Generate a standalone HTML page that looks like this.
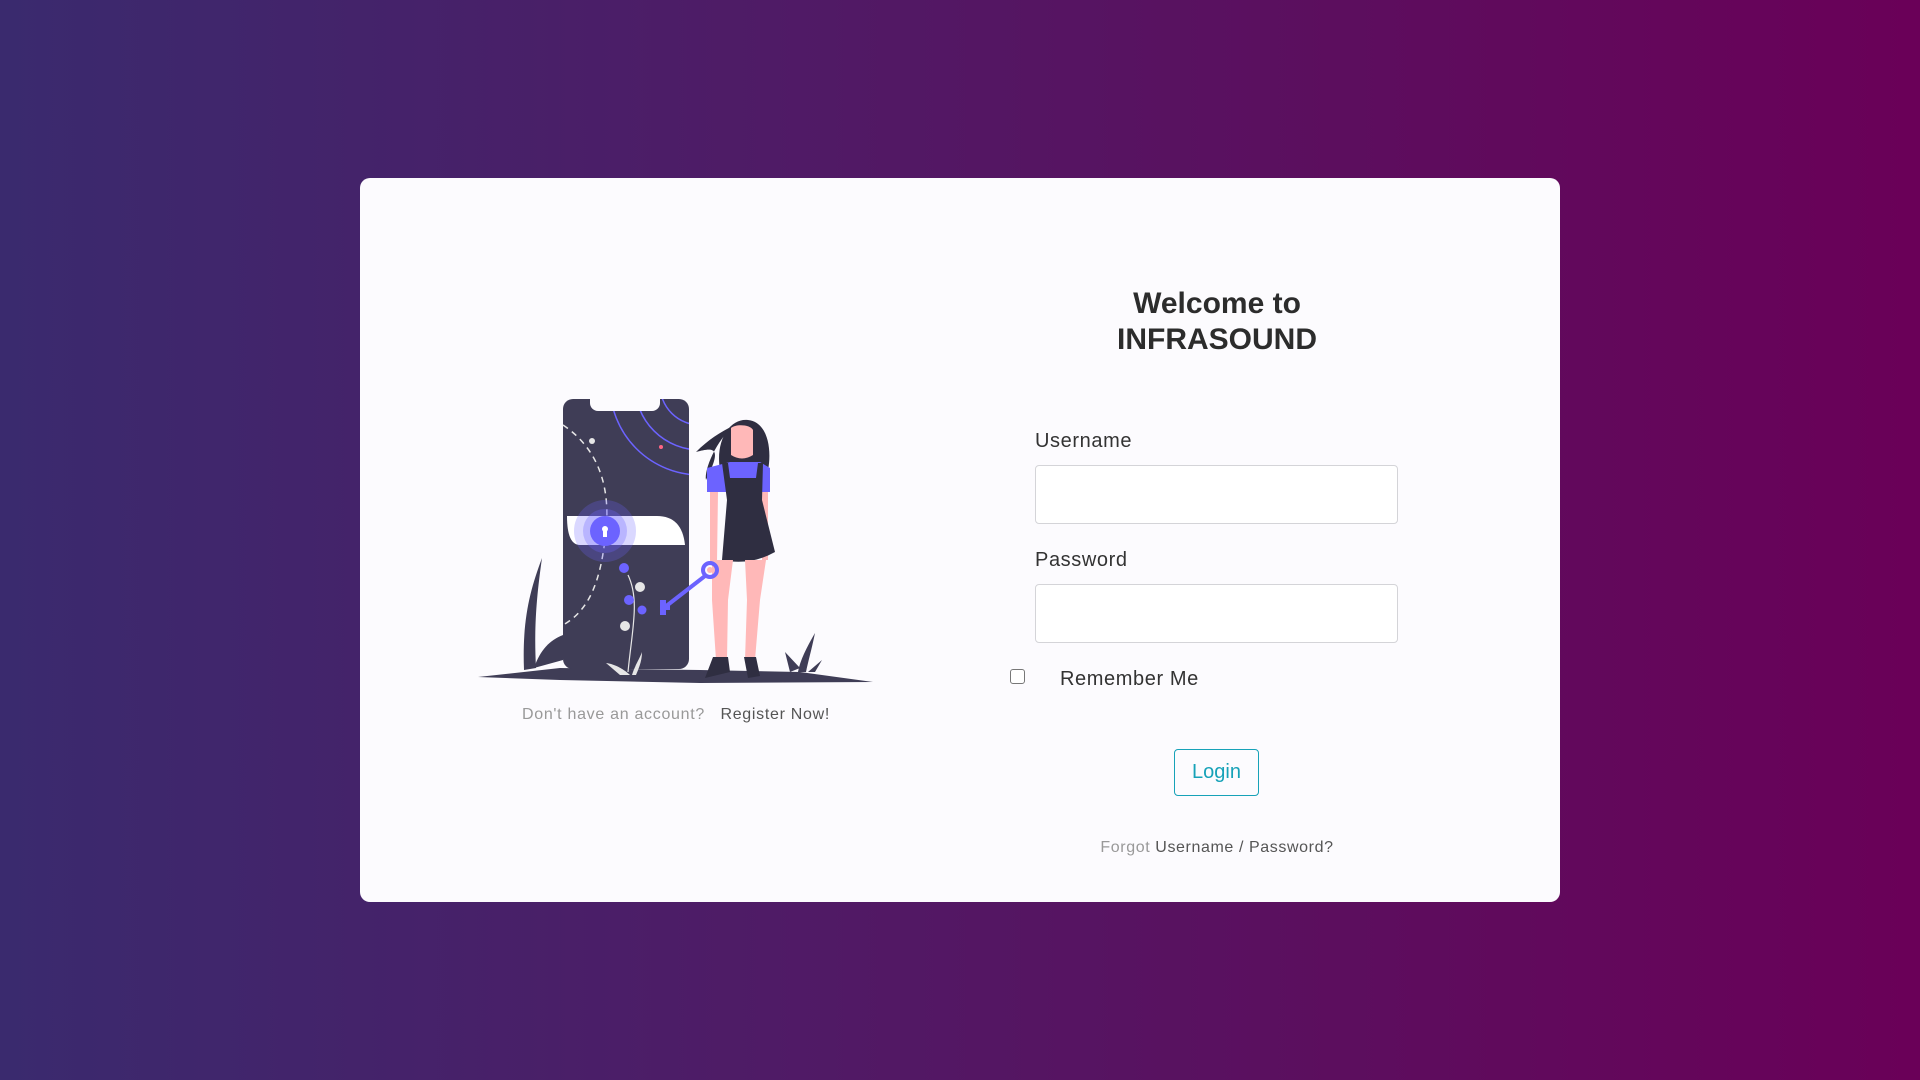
<!DOCTYPE html>
<html><head><meta charset="utf-8"><style>
html,body{margin:0;padding:0;width:1920px;height:1080px;overflow:hidden}
body{background:linear-gradient(90deg,#3a2a6e 0%,#4f1b66 40%,#5c0e5e 70%,#6a0058 100%);font-family:"Liberation Sans",sans-serif;position:relative}
.card{position:absolute;left:360px;top:178px;width:1200px;height:724px;background:#fcfbfe;border-radius:10px}
.abs{position:absolute}
h1{position:absolute;left:1017px;width:400px;top:286px;margin:0;text-align:center;font-size:30px;line-height:36px;font-weight:bold;color:#2c2c2c}
.lbl{position:absolute;left:1035px;font-size:20px;color:#333;letter-spacing:0.6px}
.inp{position:absolute;left:1035px;width:361px;height:57px;border:1px solid #d4d4d8;border-radius:4px;background:#fff}
</style></head><body>
<div class="card"></div>
<svg class="abs" style="left:0;top:0" width="1920" height="1080" viewBox="0 0 1920 1080">
<defs><clipPath id="ph"><rect x="563" y="399" width="126" height="270" rx="10"/></clipPath></defs>
<polygon points="478,677 560,668 700,670 800,672 873,682 700,683 560,680" fill="#3f3d56"/>
<path d="M524,670 C522,620 530,590 542,558 C536,600 534,630 536,668 Z" fill="#3f3d56"/>
<path d="M534,668 C540,650 550,640 563,635 L563,660 Z" fill="#3f3d56"/>
<rect x="563" y="399" width="126" height="270" rx="10" fill="#3f3d56"/>
<g clip-path="url(#ph)" fill="none" stroke="#6c63ff" stroke-width="1.5">
<circle cx="700" cy="385" r="90"/><circle cx="700" cy="385" r="65"/><circle cx="700" cy="385" r="40"/>
</g>
<path d="M590,399 h70 v4 a8,8 0 0 1 -8,8 h-54 a8,8 0 0 1 -8,-8z" fill="#fcfbfe"/>
<path d="M563,425 C600,450 612,490 605,540 C600,580 590,610 563,625" fill="none" stroke="#e6e6e6" stroke-width="1.5" stroke-dasharray="6,5"/>
<circle cx="592" cy="441" r="3" fill="#e6e6e6"/><circle cx="661" cy="447" r="2" fill="#ff6584"/>
<path d="M567,516 h90 q25,0 28,29 h-105 q-13,0 -13,-29z" fill="#fff"/>
<circle cx="605" cy="531" r="31" fill="#6c63ff" opacity="0.25"/>
<circle cx="605" cy="531" r="22" fill="#6c63ff" opacity="0.3"/>
<circle cx="605" cy="531" r="15" fill="#6c63ff"/>
<rect x="603" y="529" width="4" height="8" fill="#fff"/><circle cx="605" cy="529" r="3" fill="#fff"/>
<path d="M628,575 C640,600 632,630 628,672" fill="none" stroke="#e6e6e6" stroke-width="1.2"/>
<circle cx="624" cy="568" r="5" fill="#6c63ff"/><circle cx="640" cy="587" r="5" fill="#e6e6e6"/>
<circle cx="629" cy="600" r="5" fill="#6c63ff"/><circle cx="642" cy="610" r="4.5" fill="#6c63ff"/>
<circle cx="625" cy="626" r="5" fill="#e6e6e6"/>
<path d="M606,663 C615,664 625,670 630,675 L620,675 Z M632,675 C635,665 640,658 642,652 C642,662 638,670 636,675Z" fill="#e6e6e6"/>
<path d="M706,480 C704,470 716,440 735,425 C720,432 708,440 696,452 C712,448 724,445 706,480Z" fill="#2f2e41"/>
<path d="M720,470 C715,440 730,418 748,420 C768,422 772,450 768,470 Z" fill="#2f2e41"/>
<path d="M731,428 C735,424 750,424 753,430 L753,455 Q742,462 731,455z" fill="#ffb8b8"/>
<path d="M707,468 L730,462 L760,462 L770,468 L770,492 L707,492 Z" fill="#6c63ff"/>
<path d="M710,492 L718,492 L717,562 L710,562 Z M762,492 L768,492 L768,560 L762,560Z" fill="#ffb8b8"/>
<path d="M722,463 L728,463 L730,478 L756,478 L758,463 L763,463 L762,500 L775,552 Q750,566 722,560 L727,500 Z" fill="#2f2e41"/>
<path d="M712,560 L733,560 L728,600 L727,660 L716,660 L712,600 Z M745,560 L766,560 L760,600 L755,660 L745,660 L747,600Z" fill="#ffb8b8"/>
<path d="M713,657 L728,657 L730,672 L705,678 Z M744,657 L756,657 L760,676 L748,678Z" fill="#2f2e41"/>
<circle cx="710" cy="570" r="7" fill="none" stroke="#6c63ff" stroke-width="4"/>
<path d="M705,576 L665,607" stroke="#6c63ff" stroke-width="4"/>
<path d="M660,600 h6 v4 h4 v6 h-4 v5 h-6 z" fill="#6c63ff"/>
<circle cx="710" cy="570" r="3" fill="#ffb8b8"/>
<path d="M790,672 L785,652 L800,668 Z M798,672 C800,660 808,645 815,633 C812,648 808,662 806,672Z M808,672 L822,660 L815,672Z" fill="#3f3d56"/>
</svg>
<div class="abs" style="left:360px;width:632px;top:705px;text-align:center;font-size:16px;line-height:20px;letter-spacing:0.7px"><span style="color:#999">Don't have an account?</span>&nbsp;&nbsp; <span style="color:#555">Register Now!</span></div>
<h1>Welcome to<br>INFRASOUND</h1>
<div class="lbl" style="top:430px">Username</div>
<div class="inp" style="top:465px"></div>
<div class="lbl" style="top:549px">Password</div>
<div class="inp" style="top:584px"></div>
<div class="abs" style="left:1010px;top:669px;width:13px;height:13px;border:1px solid #777;border-radius:3px;background:#fff"></div>
<div class="abs" style="left:1060px;top:668px;font-size:20px;color:#333;letter-spacing:0.6px">Remember Me</div>
<div class="abs" style="left:1174px;top:749px;width:83px;height:45px;border:1px solid #17a2b8;border-radius:4px;color:#17a2b8;font-size:20px;line-height:45px;text-align:center">Login</div>
<div class="abs" style="left:1017px;width:400px;top:839px;text-align:center;font-size:16px;color:#555;letter-spacing:0.6px"><span style="color:#999">Forgot</span> Username / Password?</div>
</body></html>
